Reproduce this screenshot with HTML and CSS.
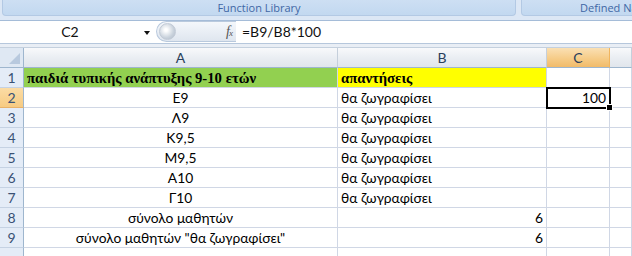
FILE: index.html
```html
<!DOCTYPE html>
<html>
<head>
<meta charset="utf-8">
<link rel="stylesheet" href="styles.css">
</head>
<body>
<div class="app">
  <div class="ribbon">
    <div class="groups">
      <div class="group g1"><span>Function Library</span></div>
      <div class="group g2"><span>Defined Names</span></div>
    </div>
  </div>
  <div class="fbar">
    <div class="namebox"><span class="nm">C2</span><span class="arrow"></span></div>
    <div class="fxbox"><span class="knob"></span><span class="fx">f<sub>x</sub></span></div>
    <div class="formula">=B9/B8*100</div>
  </div>
  <div class="sep"></div>
  <div class="sheet">
    <div class="corner"><span class="tri"></span></div>
    <div class="ch">A</div>
    <div class="ch">B</div>
    <div class="ch sel">C</div>
    <div class="ch last"></div>

    <div class="rh">1</div>
    <div class="c bold green">παιδιά τυπικής ανάπτυξης 9-10 ετών</div>
    <div class="c bold yellow">απαντήσεις</div>
    <div class="c"></div>
    <div class="c"></div>

    <div class="rh sel">2</div>
    <div class="c ctr">Ε9</div>
    <div class="c">θα ζωγραφίσει</div>
    <div class="c num active">100</div>
    <div class="c"></div>

    <div class="rh">3</div>
    <div class="c ctr">Λ9</div>
    <div class="c">θα ζωγραφίσει</div>
    <div class="c"></div>
    <div class="c"></div>

    <div class="rh">4</div>
    <div class="c ctr">Κ9,5</div>
    <div class="c">θα ζωγραφίσει</div>
    <div class="c"></div>
    <div class="c"></div>

    <div class="rh">5</div>
    <div class="c ctr">Μ9,5</div>
    <div class="c">θα ζωγραφίσει</div>
    <div class="c"></div>
    <div class="c"></div>

    <div class="rh">6</div>
    <div class="c ctr">Α10</div>
    <div class="c">θα ζωγραφίσει</div>
    <div class="c"></div>
    <div class="c"></div>

    <div class="rh">7</div>
    <div class="c ctr">Γ10</div>
    <div class="c">θα ζωγραφίσει</div>
    <div class="c"></div>
    <div class="c"></div>

    <div class="rh">8</div>
    <div class="c ctr">σύνολο μαθητών</div>
    <div class="c num">6</div>
    <div class="c"></div>
    <div class="c"></div>

    <div class="rh">9</div>
    <div class="c ctr">σύνολο μαθητών "θα ζωγραφίσει"</div>
    <div class="c num">6</div>
    <div class="c"></div>
    <div class="c"></div>

    <div class="rh"></div>
    <div class="c"></div>
    <div class="c"></div>
    <div class="c"></div>
    <div class="c"></div>
  </div>
</div>
</body>
</html>
```
FILE: styles.css
```css
html, body {
  margin: 0;
  padding: 0;
  background: #ffffff;
}
.app {
  width: 632px;
  height: 256px;
  overflow: hidden;
  font-family: "Lato", "Open Sans", "Noto Sans", sans-serif;
}
.ribbon {
  height: 21px;
  background: #dce7f5;
  border-bottom: 1px solid #a5bcd8;
  box-sizing: border-box;
  overflow: hidden;
}
.groups {
  display: flex;
  height: 17px;
  gap: 5px;
  padding-left: 2px;
}
.group {
  flex-shrink: 0;
  height: 16px;
  background: linear-gradient(#cddff3, #c2d8f0);
  border: 1px solid #b3c9e4;
  border-top: none;
  border-radius: 0 0 4px 4px;
  color: #3f67a5;
  font-family: "Open Sans", "Noto Sans", sans-serif;
  font-size: 11px;
  line-height: 15px;
  text-align: center;
  box-sizing: border-box;
  white-space: nowrap;
}
.g1 { width: 514px; }
.g2 { width: 160px; text-align: left; padding-left: 58px; }
.fbar {
  height: 23px;
  display: flex;
  background: #fff;
  border-bottom: 1px solid #b6c7dc;
  box-sizing: border-box;
}
.namebox {
  width: 156px;
  position: relative;
  font-size: 14px;
  line-height: 22px;
}
.nm {
  display: block;
  width: 140px;
  text-align: center;
  color: #111;
}
.arrow {
  position: absolute;
  left: 144px;
  top: 10px;
  border-left: 3.5px solid transparent;
  border-right: 3.5px solid transparent;
  border-top: 4px solid #111;
}
.fxbox {
  width: 80px;
  height: 21px;
  background: linear-gradient(#f4f7fb, #dfe6ef);
  border: 1px solid #b9c9dd;
  border-right: none;
  border-radius: 11px 0 0 11px;
  box-sizing: border-box;
  display: flex;
  align-items: center;
  justify-content: space-between;
  padding: 0 4px 0 2px;
}
.knob {
  width: 15px;
  height: 15px;
  border-radius: 50%;
  background: radial-gradient(circle at 40% 40%, #ffffff 10%, #c9d2dc 60%, #aeb9c6 100%);
  border: 1px solid #c2cad6;
}
.fx {
  font-family: "Liberation Serif", serif;
  font-style: italic;
  font-size: 14px;
  color: #555;
  letter-spacing: -1px;
}
.fx sub {
  font-size: 9px;
  vertical-align: 0;
}
.formula {
  padding-left: 6px;
  font-size: 14px;
  line-height: 22px;
  color: #111;
}
.sep {
  height: 3px;
  background: #e9eef5;
  border-bottom: 1px solid #c4d0de;
}
.sheet {
  display: grid;
  grid-template-columns: 24px 314px 209px 63px 22px;
  grid-template-rows: 20px repeat(10, 20px);
  font-size: 13.8px;
  color: #000;
}
.corner {
  background: #dfe8f3;
  border-right: 1px solid #9eb6ce;
  border-bottom: 1px solid #9eb6ce;
  position: relative;
}
.tri {
  position: absolute;
  right: 3px;
  bottom: 3px;
  width: 0;
  height: 0;
  border-left: 11px solid transparent;
  border-bottom: 11px solid #b8c9de;
}
.ch {
  background: linear-gradient(#f8f9fb, #e9edf2 55%, #e1e6ec);
  border-right: 1px solid #c5cfdb;
  border-bottom: 1px solid #9eb6ce;
  text-align: center;
  line-height: 19px;
  color: #2a3f5c;
  font-size: 14px;
}
.ch.sel {
  background: linear-gradient(#fae0b4, #f6cc88 55%, #f1bb6a);
  border-right-color: #f1b55e;
}
.rh {
  background: #e4ecf7;
  border-right: 1px solid #9eb6ce;
  border-bottom: 1px solid #c5d2e3;
  text-align: center;
  line-height: 20px;
  color: #3a5275;
  font-size: 14px;
}
.rh.sel {
  background: linear-gradient(#fbdca5, #f7cb82);
  border-bottom-color: #e8b26a;
}
.c {
  border-right: 1px solid #d0d7e5;
  border-bottom: 1px solid #d0d7e5;
  padding: 0 3px;
  line-height: 20px;
  white-space: nowrap;
  position: relative;
}
.ctr { text-align: center; }
.num { text-align: right; }
.bold {
  font-family: "Liberation Serif", serif;
  font-weight: bold;
  font-size: 14.7px;
}
.green { background: #92d050; }
.yellow { background: #ffff00; }
.active {
  outline: 2px solid #000;
  outline-offset: -1px;
  z-index: 2;
}
.active::after {
  content: "";
  position: absolute;
  right: -4px;
  bottom: -4px;
  width: 5px;
  height: 5px;
  background: #000;
  border: 1px solid #fff;
}
```
